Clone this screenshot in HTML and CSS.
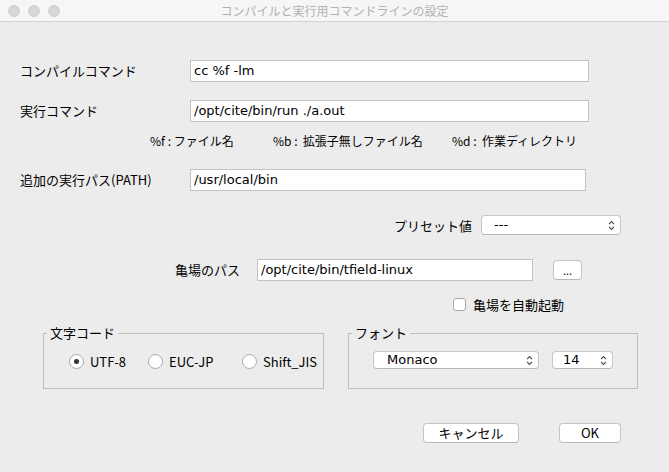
FILE: index.html
```html
<!DOCTYPE html>
<html lang="ja">
<head>
<meta charset="utf-8">
<title>コンパイルと実行用コマンドラインの設定</title>
<link rel="stylesheet" href="styles.css">
</head>
<body>
<div class="titlebar">
  <div class="lights"><span class="light"></span><span class="light"></span><span class="light"></span></div>
  <div class="title">コンパイルと実行用コマンドラインの設定</div>
  <div></div>
</div>
<div class="content">
  <div class="row row-main r-compile"><span class="lbl-main">コンパイルコマンド</span><div class="field w-long">cc %f -lm</div></div>
  <div class="row row-main r-run"><span class="lbl-main">実行コマンド</span><div class="field w-long">/opt/cite/bin/run ./a.out</div></div>
  <div class="hints"><span>%f : ファイル名</span><span>%b :&nbsp; 拡張子無しファイル名</span><span>%d :&nbsp; 作業ディレクトリ</span></div>
  <div class="row row-main r-path"><span class="lbl-main">追加の実行パス(PATH)</span><div class="field w-path">/usr/local/bin</div></div>
  <div class="row row-preset"><span>プリセット値</span>
    <div class="select sel-preset"><span class="sel-text">---</span>
      <svg class="chev" width="7" height="11" viewBox="0 0 7 11"><path d="M1 4.2 L3.5 1.6 L6 4.2 M1 6.8 L3.5 9.4 L6 6.8" fill="none" stroke="#4a4a4a" stroke-width="1.1"/></svg>
    </div>
  </div>
  <div class="row row-kame"><span class="lbl-kame">亀場のパス</span><div class="field w-kame">/opt/cite/bin/tfield-linux</div><button class="btn btn-browse">...</button></div>
  <div class="row row-check"><span class="checkbox"></span><span>亀場を自動起動</span></div>
  <div class="groups">
    <fieldset class="group g-enc"><legend>文字コード</legend>
      <div class="radios">
        <div class="radio-item"><span class="radio checked"></span><span>UTF-8</span></div>
        <div class="radio-item"><span class="radio"></span><span>EUC-JP</span></div>
        <div class="radio-item"><span class="radio"></span><span>Shift_JIS</span></div>
      </div>
    </fieldset>
    <fieldset class="group g-font"><legend>フォント</legend>
      <div class="font-sel">
        <div class="select sel-font"><span class="sel-text">Monaco</span>
          <svg class="chev" width="7" height="11" viewBox="0 0 7 11"><path d="M1 4.2 L3.5 1.6 L6 4.2 M1 6.8 L3.5 9.4 L6 6.8" fill="none" stroke="#4a4a4a" stroke-width="1.1"/></svg>
        </div>
        <div class="select sel-size"><span class="sel-text">14</span>
          <svg class="chev" width="7" height="11" viewBox="0 0 7 11"><path d="M1 4.2 L3.5 1.6 L6 4.2 M1 6.8 L3.5 9.4 L6 6.8" fill="none" stroke="#4a4a4a" stroke-width="1.1"/></svg>
        </div>
      </div>
    </fieldset>
  </div>
  <div class="buttons"><button class="btn btn-cancel">キャンセル</button><button class="btn btn-ok">OK</button></div>
</div>
</body>
</html>
```
FILE: styles.css
```css
* { box-sizing: border-box; }
html, body { margin: 0; padding: 0; }
body {
  width: 669px;
  height: 472px;
  overflow: hidden;
  background: #ececec;
  font-family: "Noto Sans CJK JP", "DejaVu Sans", sans-serif;
  font-size: 13px;
  color: #000;
}
.titlebar {
  height: 22px;
  background: #f6f6f6;
  border-bottom: 1px solid #d3d3d3;
  display: grid;
  grid-template-columns: 1fr auto 1fr;
  align-items: center;
}
.lights { display: flex; gap: 8px; padding-left: 8px; }
.light {
  width: 12px; height: 12px; border-radius: 50%;
  background: #d7d7d7; border: 1px solid #d0d0d0;
}
.title { color: #b2b2b2; font-size: 12px; line-height: 16px; }

.content { padding-top: 38px; }
.row { display: flex; align-items: center; }
.row-main { padding-left: 20px; }
.lbl-main { width: 170px; line-height: 16px; }
.field {
  height: 22px;
  background: #fff;
  border: 1px solid #c2c2c2;
  padding: 0 3px;
  font-family: "DejaVu Sans", sans-serif;
  font-size: 13px;
  line-height: 20px;
  white-space: nowrap;
}
.w-long { width: 399px; }
.w-path { width: 396px; }
.w-kame { width: 276px; }
.r-run { margin-top: 18px; }
.hints {
  margin-top: 11px;
  padding-left: 150px;
  display: grid;
  grid-template-columns: 123px 179px auto;
  font-size: 12px;
  line-height: 16px;
  white-space: nowrap;
}
.r-path { margin-top: 20px; }
.row-preset {
  margin-top: 24px;
  justify-content: flex-end;
  padding-right: 48px;
  gap: 9px;
}
.select {
  display: flex;
  align-items: center;
  justify-content: space-between;
  background: #fff;
  border: 1px solid #c6c6c6;
  border-bottom-color: #b8b8b8;
  border-radius: 4px;
  height: 20px;
  padding-right: 5px;
}
.sel-text { font-family: "DejaVu Sans", sans-serif; font-size: 13px; line-height: 16px; }
.sel-preset { width: 140px; padding-left: 12px; }
.row-kame { margin-top: 24px; padding-left: 175px; }
.lbl-kame { width: 82px; line-height: 16px; }
.btn {
  height: 20px;
  padding: 0;
  background: #fff;
  border: 1px solid #c4c4c4;
  border-bottom-color: #b6b6b6;
  border-radius: 4px;
  font-family: "Noto Sans CJK JP", "DejaVu Sans", sans-serif;
  font-size: 13px;
  line-height: 18px;
  color: #000;
}
.btn-browse { width: 29px; margin-left: 20px; font-size: 11px; }
.row-check { margin-top: 17px; padding-left: 453px; gap: 7px; height: 13px; }
.checkbox {
  width: 13px; height: 13px;
  background: #fff;
  border: 1px solid #a9a9a9;
  border-radius: 3px;
}
.groups { margin-top: 14px; padding-left: 43px; display: flex; gap: 24px; }
.group { margin: 0; padding: 0; border: 1px solid #bebebe; min-width: 0; }
.group legend { padding: 0 3px; margin-left: 3px; line-height: 16px; font-size: 13px; }
.g-enc { width: 281px; }
.g-font { width: 290px; }
.radios {
  padding: 13px 0 19px 25px;
  display: grid;
  grid-template-columns: 79px 94px auto;
  align-items: center;
}
.radio-item { display: flex; align-items: center; gap: 6px; height: 15px; line-height: 16px; }
.radio {
  width: 15px; height: 15px; border-radius: 50%;
  background: #fff;
  border: 1px solid #a8a8a8;
  display: flex; align-items: center; justify-content: center;
}
.radio.checked::after {
  content: "";
  width: 5px; height: 5px; border-radius: 50%;
  background: #333;
}
.font-sel { padding: 10px 0 19px 24px; display: flex; gap: 13px; }
.sel-font { width: 166px; height: 18px; padding-left: 13px; }
.sel-size { width: 61px; height: 18px; padding-left: 10px; }
.buttons {
  margin-top: 34px;
  display: flex;
  justify-content: flex-end;
  padding-right: 48px;
  gap: 40px;
}
.btn-cancel { width: 96px; }
.btn-ok { width: 62px; }
```
